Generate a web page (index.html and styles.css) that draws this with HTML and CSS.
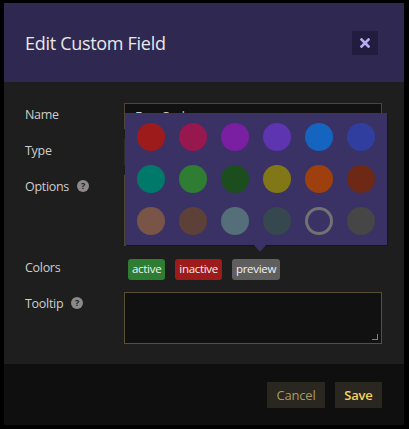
FILE: index.html
```html
<!DOCTYPE html>
<html lang="en">
<head>
<meta charset="utf-8">
<title>Edit Custom Field</title>
<link rel="stylesheet" href="styles.css">
</head>
<body>
<div class="modal">
  <div class="modal-header">
    <h1 class="title">Edit Custom Field</h1>
    <button class="close" aria-label="Close">
      <svg width="10" height="10" viewBox="0 0 10 10"><path d="M1.5 1.5 L8.5 8.5 M8.5 1.5 L1.5 8.5" stroke="#b7a9f2" stroke-width="2.6" stroke-linecap="square"/></svg>
    </button>
  </div>
  <div class="modal-body">
    <div class="form">
      <label class="label">Name</label>
      <div class="input name-input">Fun Code</div>

      <label class="label">Type</label>
      <div class="input select">Text</div>

      <label class="label">Options <span class="help">?</span></label>
      <div class="input options-area"></div>

      <label class="label">Colors</label>
      <div class="badges">
        <span class="badge badge-active">active</span>
        <span class="badge badge-inactive">inactive</span>
        <span class="badge badge-preview">preview</span>
      </div>

      <label class="label">Tooltip <span class="help">?</span></label>
      <div class="textarea-wrap"><div class="input tooltip-area"></div></div>
    </div>

    <div class="popover">
      <div class="swatches">
        <span class="sw" style="background:#9d1b1b"></span>
        <span class="sw" style="background:#97174f"></span>
        <span class="sw" style="background:#7b1fa2"></span>
        <span class="sw" style="background:#5e35b1"></span>
        <span class="sw" style="background:#1565c0"></span>
        <span class="sw" style="background:#303f9f"></span>
        <span class="sw" style="background:#00796b"></span>
        <span class="sw" style="background:#2e7d32"></span>
        <span class="sw" style="background:#1b4d1e"></span>
        <span class="sw" style="background:#827717"></span>
        <span class="sw" style="background:#9e400e"></span>
        <span class="sw" style="background:#6d2816"></span>
        <span class="sw" style="background:#795548"></span>
        <span class="sw" style="background:#5d4037"></span>
        <span class="sw" style="background:#546e7a"></span>
        <span class="sw" style="background:#37474f"></span>
        <span class="sw sw-none"></span>
        <span class="sw" style="background:#464646"></span>
      </div>
    </div>
  </div>
  <div class="modal-footer">
    <button class="btn btn-cancel">Cancel</button>
    <button class="btn btn-save">Save</button>
  </div>
</div>
</body>
</html>
```
FILE: styles.css
```css
html, body {
  margin: 0;
  padding: 0;
  background: #000;
}
body {
  font-family: "Open Sans", "Noto Sans", sans-serif;
  width: 409px;
  height: 429px;
  overflow: hidden;
}
.modal {
  margin: 3px 5px 4px 4px;
  width: 400px;
  height: 422px;
  display: flex;
  flex-direction: column;
}
.modal-header {
  height: 79px;
  flex: none;
  background: #2f2952;
  display: flex;
  align-items: center;
  justify-content: space-between;
  padding: 0 26px 0 21px;
}
.title {
  margin: 0;
  font-size: 18px;
  font-weight: 400;
  color: #e8e8e8;
  letter-spacing: -0.3px;
}
.close {
  width: 26px;
  height: 24px;
  background: #221d3e;
  border: none;
  padding: 0;
  display: flex;
  align-items: center;
  justify-content: center;
}
.modal-body {
  flex: 1;
  background: #1e1e1e;
  padding: 21px 22px 20px 21px;
  position: relative;
}
.form {
  display: grid;
  grid-template-columns: 99px 258px;
  row-gap: 10px;
  align-items: start;
}
.label {
  font-size: 12.5px;
  letter-spacing: -0.3px;
  color: #cdcdcd;
  height: 22px;
  display: flex;
  align-items: center;
  gap: 8px;
}
.help {
  width: 12px;
  height: 12px;
  border-radius: 50%;
  background: #8a8a8a;
  color: #1e1e1e;
  font-size: 9px;
  font-weight: 700;
  letter-spacing: 0;
  line-height: 12px;
  text-align: center;
  display: inline-block;
}
.input {
  box-sizing: border-box;
  height: 26px;
  background: #111;
  border: 1px solid #4d4630;
  color: #ccc;
  font-size: 13px;
  padding: 3px 10px;
}
.select {
  border-color: #2f2d25;
}
.options-area {
  height: 71px;
}
.badges {
  height: 26px;
  display: flex;
  align-items: center;
  gap: 10px;
  padding-left: 4px;
}
.badge {
  height: 21px;
  line-height: 20px;
  padding: 0 4px;
  border-radius: 3px;
  font-size: 11.5px;
  letter-spacing: -0.3px;
  color: #f2f2f2;
  box-sizing: border-box;
}
.badge-active { background: #2e7d32; }
.badge-inactive { background: #9d1b1b; }
.badge-preview { background: #5f5f5f; }
.textarea-wrap {
  position: relative;
}
.tooltip-area {
  height: 52px;
  border-color: #575033;
}
.textarea-wrap::after {
  content: "";
  position: absolute;
  right: 4px;
  bottom: 4px;
  width: 5px;
  height: 5px;
  border-right: 1px solid #8a8060;
  border-bottom: 1px solid #8a8060;
}
.popover {
  position: absolute;
  left: 121px;
  top: 31px;
  width: 262px;
  height: 132px;
  box-sizing: border-box;
  background: #3a3265;
  padding: 10px 12px;
  box-shadow: 1px 1px 0 #161420;
}
.popover::after {
  content: "";
  position: absolute;
  left: 129px;
  bottom: -7px;
  border-left: 6px solid transparent;
  border-right: 6px solid transparent;
  border-top: 7px solid #3a3265;
}
.swatches {
  display: grid;
  grid-template-columns: repeat(6, 28px);
  gap: 14px;
}
.sw {
  width: 28px;
  height: 28px;
  border-radius: 50%;
  display: block;
  box-sizing: border-box;
}
.sw-none {
  border: 3px solid #727272;
  background: transparent;
}
.modal-footer {
  height: 61px;
  flex: none;
  background: #0f0f0f;
  display: flex;
  align-items: center;
  justify-content: flex-end;
  gap: 10px;
  padding-right: 22px;
}
.btn {
  height: 26px;
  border: none;
  background: #29271f;
  font-family: "Open Sans", "Noto Sans", sans-serif;
  font-size: 13px;
  letter-spacing: -0.2px;
  padding: 0;
}
.btn-cancel {
  color: #a99b5e;
  width: 58px;
}
.btn-save {
  color: #f3d45c;
  font-weight: 600;
  width: 47px;
}
```
